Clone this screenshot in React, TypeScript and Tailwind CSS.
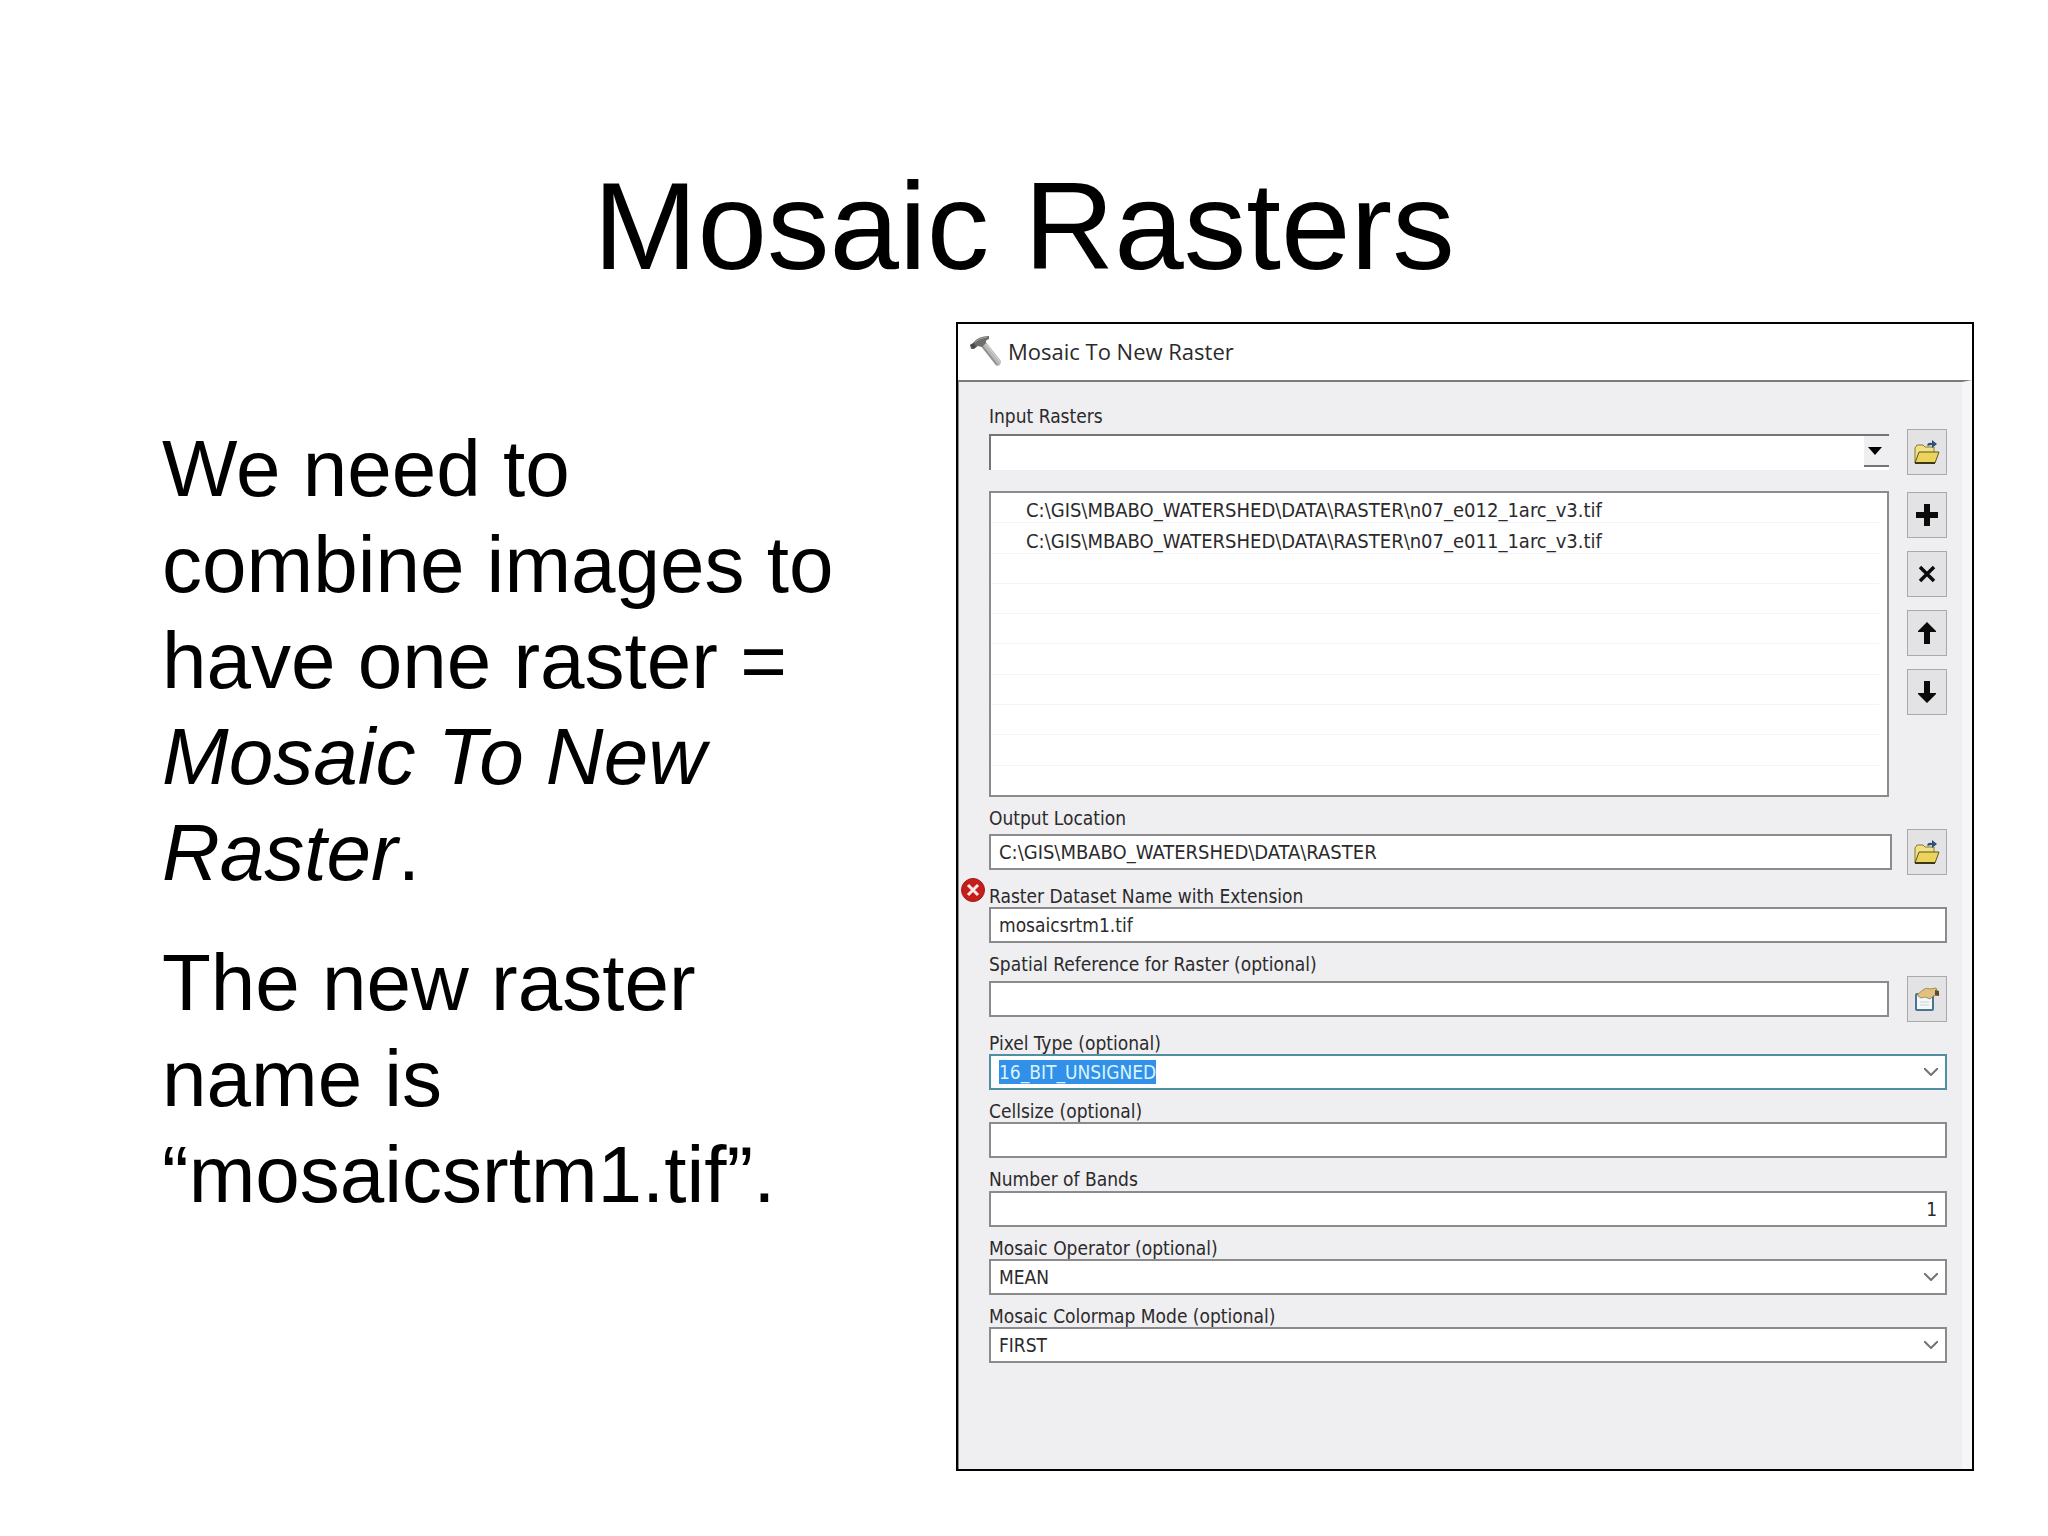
import { useEffect, useRef } from "react";
import type { ReactNode } from "react";

const files = [
  "C:\\GIS\\MBABO_WATERSHED\\DATA\\RASTER\\n07_e012_1arc_v3.tif",
  "C:\\GIS\\MBABO_WATERSHED\\DATA\\RASTER\\n07_e011_1arc_v3.tif",
];

const ROWS = 10;

function HammerIcon() {
  return (
    <svg viewBox="0 0 32 32" className="h-8 w-8" aria-hidden="true">
      <path d="M11 10 L16 6 L31 25 Q31 30 27 30 Z" fill="#b9b9b7" />
      <path d="M12 10 L27 29" stroke="#8f8f8d" strokeWidth="2" />
      <path d="M16 8 L30 26" stroke="#d6d6d4" strokeWidth="1" />
      <path d="M0 9 L3 7 Q8 0 19 0 L19 3 Q15 4 16 7 L12 11 L8 10 L4 13 L1 13 Z" fill="#6d6d6b" />
      <path d="M5 6 Q9 2 17 1" stroke="#a5a5a3" strokeWidth="1" fill="none" />
      <path d="M0 9 L4 7 L6 11 L3 13 Z" fill="#4a4a49" />
    </svg>
  );
}

function FolderIcon() {
  return (
    <svg viewBox="0 0 26 26" className="h-[26px] w-[26px]" aria-hidden="true">
      <path d="M1 24 V9 L3 6 H9 L11 8 H20 V13" fill="#f1e08a" stroke="#8a7a2c" strokeWidth="1" />
      <path d="M1 24 L5 13 H25 L21 24 Z" fill="#ecd45c" stroke="#5e531c" strokeWidth="1" />
      <path d="M1 24 H21" stroke="#3d3714" strokeWidth="2" />
      <path d="M13 6 Q14 3 18 4 V1 L23 5 L18 9 V6 Q15 6 14 7 Z" fill="#2c4f7c" />
    </svg>
  );
}

function PropertiesIcon() {
  return (
    <svg viewBox="0 0 26 26" className="h-[26px] w-[26px]" aria-hidden="true">
      <rect x="2" y="8" width="17" height="16" rx="1" fill="#f4f8fa" stroke="#4a7590" strokeWidth="2" />
      <path d="M6 16 H15 M6 19 H15" stroke="#c3d3dc" strokeWidth="1" />
      <path d="M4 8 L9 4 Q12 1 16 3 L22 2 L25 9 L19 10 L16 13 L11 11 L7 12 L4 10 Z" fill="#dfc182" stroke="#a98d55" strokeWidth="1" />
      <path d="M21 4 L25 5 V10 L21 9 Z" fill="#5a4a30" />
    </svg>
  );
}

function ErrorIcon() {
  return (
    <svg viewBox="0 0 24 24" className="h-6 w-6" aria-hidden="true">
      <circle cx="12" cy="12" r="11.5" fill="#c3201c" stroke="#a31a18" strokeWidth="1" />
      <path d="M7 7 L17 17 M17 7 L7 17" stroke="#fbe9e6" strokeWidth="3" />
    </svg>
  );
}

function ChevronIcon() {
  return (
    <svg viewBox="0 0 14 8" className="h-2 w-[14px]" aria-hidden="true">
      <path d="M0 0 L7 7 L14 0" fill="none" stroke="#747374" strokeWidth="2" />
    </svg>
  );
}

function ToolButton({ label, children }: { label: string; children: ReactNode }) {
  return (
    <button
      type="button"
      aria-label={label}
      className="flex h-[46px] w-10 shrink-0 items-center justify-center border border-[#a9a8aa] bg-[#e3e2e4]"
    >
      {children}
    </button>
  );
}

function Label({ id, children }: { id: string; children: ReactNode }) {
  return (
    <label htmlFor={id} className="block w-fit text-[19px] leading-5 whitespace-nowrap">
      {children}
    </label>
  );
}

const box = "block h-9 w-full min-w-0 border-2 border-[#8b8a8c] bg-white px-2 leading-6 outline-none";

function SelectField({ id, label, value }: { id: string; label: string; value: string }) {
  return (
    <div>
      <Label id={id}>{label}</Label>
      <div className="relative mt-px">
        <select id={id} defaultValue={value} className={`appearance-none text-[19px] ${box}`}>
          <option>{value}</option>
        </select>
        <span className="pointer-events-none absolute inset-y-0 right-[9px] flex items-center">
          <ChevronIcon />
        </span>
      </div>
    </div>
  );
}

function Dialog() {
  const pixelType = useRef<HTMLInputElement>(null);

  useEffect(() => {
    pixelType.current?.focus();
    pixelType.current?.select();
  }, []);

  return (
    <section className="flex min-h-[1149px] flex-col border-2 border-black bg-white font-['DejaVu_Sans_Condensed','DejaVu_Sans',sans-serif] text-[#2b2a2c]">
      <header className="flex h-14 items-center gap-[6px] px-3">
        <HammerIcon />
        <h2 className="pb-[2px] font-['Open_Sans',sans-serif] text-[22px] leading-8">Mosaic To New Raster</h2>
      </header>

      <form className="flex grow flex-col gap-[11px] border-t-2 border-r-10 border-l border-t-[#7b7a7c] border-r-[#f6f5f7] border-l-[#8b8a8c] bg-[#efeef0] pt-6 pr-[15px] pl-[30px]">
        <div>
          <Label id="input-rasters">Input Rasters</Label>
          <div className="mt-[3px] flex items-center justify-between gap-[18px]">
            <div className="flex h-9 grow border-t-2 border-l-2 border-[#747375] bg-white">
              <input id="input-rasters" type="text" className="w-full min-w-0 px-2 text-[19px] outline-none" />
              <button type="button" aria-label="Show layers" className="mb-[3px] flex w-[25px] shrink-0 items-center justify-center border-b-2 border-[#747375] bg-[#efeef0] pr-1">
                <svg viewBox="0 0 14 8" className="h-2 w-[14px]" aria-hidden="true">
                  <path d="M0 0 H14 L7 8 Z" fill="#000" />
                </svg>
              </button>
            </div>
            <ToolButton label="Browse input rasters">
              <FolderIcon />
            </ToolButton>
          </div>

          <div className="mt-4 flex gap-[18px]">
            <ul aria-label="Rasters" className="flex h-[306px] grow flex-col border-2 border-[#8b8a8c] bg-white">
              {Array.from({ length: ROWS }, (_, i) => (
                <li key={i} className="mr-2 flex flex-1 items-end border-b border-[#f3f2f4] pl-[35px] text-xl leading-6 whitespace-nowrap last:border-b-0">
                  {files[i]}
                </li>
              ))}
            </ul>
            <div className="flex flex-col gap-[13px] pt-px">
              <ToolButton label="Add">
                <svg viewBox="0 0 22 22" className="h-[22px] w-[22px]" aria-hidden="true">
                  <path d="M8 0 H14 V8 H22 V14 H14 V22 H8 V14 H0 V8 H8 Z" fill="#0b0b0b" />
                </svg>
              </ToolButton>
              <ToolButton label="Remove">
                <svg viewBox="0 0 22 22" className="h-[22px] w-[22px]" aria-hidden="true">
                  <path d="M4 4 L18 18 M18 4 L4 18" stroke="#0b0b0b" strokeWidth="3.5" />
                </svg>
              </ToolButton>
              <ToolButton label="Move up">
                <svg viewBox="0 0 22 22" className="h-[22px] w-[22px]" aria-hidden="true">
                  <path d="M11 0 L20 9 V10 H14 V22 H8 V10 H2 V9 Z" fill="#0b0b0b" />
                </svg>
              </ToolButton>
              <ToolButton label="Move down">
                <svg viewBox="0 0 22 22" className="h-[22px] w-[22px]" aria-hidden="true">
                  <path d="M11 22 L20 13 V12 H14 V0 H8 V12 H2 V13 Z" fill="#0b0b0b" />
                </svg>
              </ToolButton>
            </div>
          </div>
        </div>

        <div>
          <Label id="output-location">Output Location</Label>
          <div className="mt-px flex items-center gap-[15px]">
            <input id="output-location" type="text" defaultValue="C:\GIS\MBABO_WATERSHED\DATA\RASTER" className={`text-xl ${box}`} />
            <ToolButton label="Browse output location">
              <FolderIcon />
            </ToolButton>
          </div>
        </div>

        <div className="relative">
          <span className="absolute -top-2 -left-7">
            <ErrorIcon />
          </span>
          <Label id="dataset-name">Raster Dataset Name with Extension</Label>
          <input id="dataset-name" type="text" defaultValue="mosaicsrtm1.tif" className={`mt-px text-[19px] ${box}`} />
        </div>

        <div>
          <Label id="spatial-reference">Spatial Reference for Raster (optional)</Label>
          <div className="mt-[2px] flex items-center gap-[18px]">
            <input id="spatial-reference" type="text" className={`text-[19px] ${box}`} />
            <ToolButton label="Spatial reference properties">
              <PropertiesIcon />
            </ToolButton>
          </div>
        </div>

        <div>
          <Label id="pixel-type">Pixel Type (optional)</Label>
          <div className="mt-px flex h-9 items-center border-2 border-[#4f8f9f] bg-white pr-[7px]">
            <input
              ref={pixelType}
              id="pixel-type"
              type="text"
              defaultValue="16_BIT_UNSIGNED"
              className="h-6 grow px-2 text-[19px] leading-6 outline-none selection:bg-[#3390e8] selection:text-[#d8f4ff]"
            />
            <button type="button" aria-label="Show pixel types">
              <ChevronIcon />
            </button>
          </div>
        </div>

        <div>
          <Label id="cellsize">Cellsize (optional)</Label>
          <input id="cellsize" type="text" className={`mt-px text-[19px] ${box}`} />
        </div>

        <div>
          <Label id="bands">Number of Bands</Label>
          <input id="bands" type="text" defaultValue="1" className={`mt-[2px] text-right text-[19px] ${box}`} />
        </div>

        <SelectField id="operator" label="Mosaic Operator (optional)" value="MEAN" />
        <SelectField id="colormap" label="Mosaic Colormap Mode (optional)" value="FIRST" />
      </form>
    </section>
  );
}

export default function App() {
  return (
    <main className="min-h-screen bg-white pt-[154px] pr-[74px] pb-16 pl-[162px] font-['Liberation_Sans',Arial,sans-serif] text-black">
      <h1 className="pr-[88px] text-center text-[125px] leading-[144px]">Mosaic Rasters</h1>

      <div className="mt-6 grid grid-cols-[794fr_1018fr]">
        <div className="space-y-[34px] pt-[99px] pr-24 text-[80px] leading-[96px]">
          <p>
            We need to combine images to have one raster = <em>Mosaic To New Raster</em>.
          </p>
          <p>The new raster name is “mosaicsrtm1.tif”.</p>
        </div>
        <Dialog />
      </div>
    </main>
  );
}
